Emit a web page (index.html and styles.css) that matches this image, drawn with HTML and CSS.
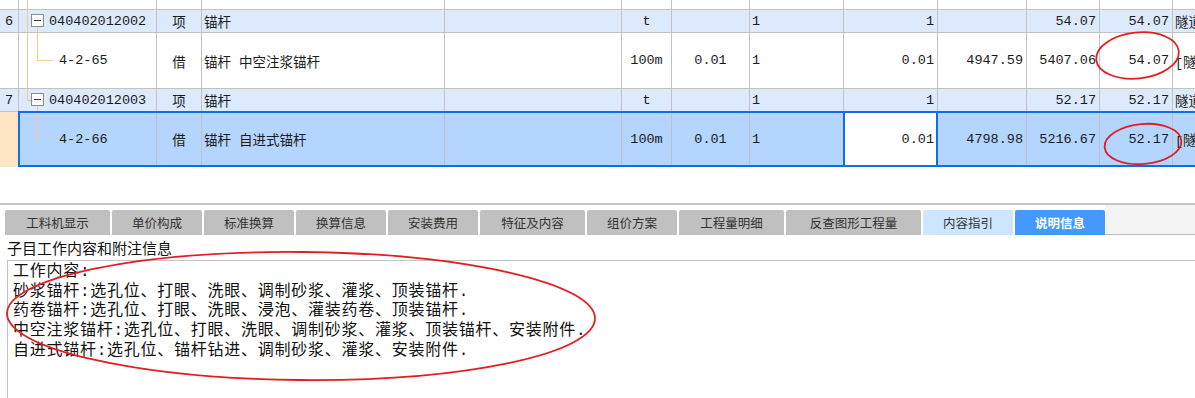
FILE: index.html
```html
<!DOCTYPE html>
<html lang="zh-CN">
<head>
<meta charset="utf-8">
<title>说明信息</title>
<link rel="stylesheet" href="styles.css">
</head>
<body>
<div class="page">
  <div class="grid">
    <div class="row r-top">
      <div class="c c0"></div>
      <div class="c c1"><span class="tl v full"></span></div>
      <div class="c c2"></div><div class="c c3"></div><div class="c c4"></div><div class="c c5"></div><div class="c c6"></div><div class="c c7"></div><div class="c c8"></div><div class="c c9"></div><div class="c c10"></div><div class="c c11"></div><div class="c c12"></div>
    </div>

    <div class="row r-h">
      <div class="c c0">6</div>
      <div class="c c1 code"><span class="tl v full"></span><span class="tbox"></span><span class="tl v down"></span>040402012002</div>
      <div class="c c2">项</div>
      <div class="c c3">锚杆</div>
      <div class="c c4"></div>
      <div class="c c5">t</div>
      <div class="c c6"></div>
      <div class="c c7">1</div>
      <div class="c c8">1</div>
      <div class="c c9"></div>
      <div class="c c10">54.07</div>
      <div class="c c11">54.07</div>
      <div class="c c12">隧道工程</div>
    </div>

    <div class="row r-c">
      <div class="c c0"></div>
      <div class="c c1 sub"><span class="tl v full"></span><span class="tl v elbow"></span><span class="tl h elbow-h"></span>4-2-65</div>
      <div class="c c2">借</div>
      <div class="c c3">锚杆 中空注浆锚杆</div>
      <div class="c c4"></div>
      <div class="c c5">100m</div>
      <div class="c c6">0.01</div>
      <div class="c c7">1</div>
      <div class="c c8">0.01</div>
      <div class="c c9">4947.59</div>
      <div class="c c10">5407.06</div>
      <div class="c c11">54.07</div>
      <div class="c c12">[隧道工程]</div>
    </div>

    <div class="row r-h r-last">
      <div class="c c0">7</div>
      <div class="c c1 code"><span class="tl v half"></span><span class="tl h stub"></span><span class="tbox"></span><span class="tl v down"></span>040402012003</div>
      <div class="c c2">项</div>
      <div class="c c3">锚杆</div>
      <div class="c c4"></div>
      <div class="c c5">t</div>
      <div class="c c6"></div>
      <div class="c c7">1</div>
      <div class="c c8">1</div>
      <div class="c c9"></div>
      <div class="c c10">52.17</div>
      <div class="c c11">52.17</div>
      <div class="c c12">隧道工程</div>
    </div>

    <div class="row r-sel">
      <div class="sel-no"></div>
      <div class="sel-box">
        <div class="c c1 sub s1"><span class="tl v elbow-s"></span><span class="tl h elbow-sh"></span>4-2-66</div>
        <div class="c c2">借</div>
        <div class="c c3">锚杆 自进式锚杆</div>
        <div class="c c4"></div>
        <div class="c c5">100m</div>
        <div class="c c6">0.01</div>
        <div class="c c7 s7">1</div>
        <div class="c c8 s8">0.01</div>
        <div class="c c9">4798.98</div>
        <div class="c c10">5216.67</div>
        <div class="c c11">52.17</div>
        <div class="c c12">[隧道工程]</div>
      </div>
    </div>
  </div>

  <div class="tabline"></div>
  <div class="tabstrip">
    <div class="tabs">
      <div class="tab w105">工料机显示</div>
      <div class="tab w90">单价构成</div>
      <div class="tab w90">标准换算</div>
      <div class="tab w90">换算信息</div>
      <div class="tab w90">安装费用</div>
      <div class="tab w105">特征及内容</div>
      <div class="tab w90">组价方案</div>
      <div class="tab w105">工程量明细</div>
      <div class="tab w135">反查图形工程量</div>
      <div class="tab w90 tab-soft">内容指引</div>
      <div class="tab w90 tab-active">说明信息</div>
    </div>
    <div class="tabfill"></div>
  </div>

  <div class="label">子目工作内容和附注信息</div>
  <div class="memo">
    <div class="memo-line">工作内容:</div>
    <div class="memo-line">砂浆锚杆:选孔位、打眼、洗眼、调制砂浆、灌浆、顶装锚杆.</div>
    <div class="memo-line">药卷锚杆:选孔位、打眼、洗眼、浸泡、灌装药卷、顶装锚杆.</div>
    <div class="memo-line">中空注浆锚杆:选孔位、打眼、洗眼、调制砂浆、灌浆、顶装锚杆、安装附件.</div>
    <div class="memo-line">自进式锚杆:选孔位、锚杆钻进、调制砂浆、灌浆、安装附件.</div>
  </div>

  <svg class="marks" width="1195" height="398" viewBox="0 0 1195 398">
    <ellipse cx="1137.5" cy="55.5" rx="41.5" ry="23" transform="rotate(-6 1137.5 55.5)"/>
    <ellipse cx="1143" cy="144" rx="38.5" ry="20" transform="rotate(-5 1143 144)"/>
    <ellipse cx="301" cy="316" rx="294" ry="64" transform="rotate(0.5 301 316)"/>
  </svg>
</div>
</body>
</html>
```

FILE: styles.css
```css
* {
  box-sizing: border-box;
  margin: 0;
  padding: 0;
}

html, body {
  width: 1195px;
  height: 398px;
  overflow: hidden;
  background: #ffffff;
}

body {
  font-family: "Liberation Mono", "Noto Sans CJK SC", monospace;
  font-size: 13.5px;
  color: #1c1c1c;
}

.page {
  position: relative;
  width: 1195px;
  height: 398px;
  overflow: hidden;
}

/* ---------- grid ---------- */
.grid {
  width: 1230px;
}

.row {
  display: flex;
}

.c {
  display: flex;
  align-items: center;
  white-space: nowrap;
  overflow: hidden;
  position: relative;
  border-right: 1px solid #c2c2c2;
  border-bottom: 1px solid #c2c2c2;
}

.c0 { width: 19px; justify-content: center; }
.c1 { width: 138px; }
.c2 { width: 45px; justify-content: center; }
.c3 { width: 243px; padding-left: 2px; }
.c4 { width: 177px; }
.c5 { width: 50px; justify-content: center; }
.c6 { width: 78px; justify-content: center; }
.c7 { width: 94px; padding-left: 2px; }
.c8 { width: 94px; justify-content: flex-end; padding-right: 3px; }
.c9 { width: 89px; justify-content: flex-end; padding-right: 3px; }
.c10 { width: 73px; justify-content: flex-end; padding-right: 3px; }
.c11 { width: 73px; justify-content: flex-end; padding-right: 3px; }
.c12 { flex: 1; border-right: none; padding-left: 2px; }

.r-top { height: 10px; }
.r-h { height: 23px; background: #dde9fc; }
.r-c { height: 56px; background: #ffffff; }
.r-last { height: 22px; }
.r-last .c { border-bottom: none; }

.code { padding-left: 30px; }
.sub { padding-left: 40px; }

/* selected row */
.r-sel { height: 56px; }

.sel-no {
  width: 18px;
  flex: none;
  background: #fde4c5;
  border-top: 1px solid #c2c2c2;
}

.sel-box {
  flex: 1;
  display: flex;
  background: #b4d5fd;
  border: 2px solid #0e6cf2;
}

.sel-box .c { border-bottom: none; }
.sel-box .s1 { width: 137px; padding-left: 39px; }
.sel-box .s7 { width: 93px; border-right: none; }
.sel-box .s8 {
  width: 95px;
  background: #ffffff;
  border-left: 2px solid #0e6cf2;
  border-right: 2px solid #0e6cf2;
  padding-right: 2px;
}

/* tree lines */
.tl {
  position: absolute;
  background: #f7c88f;
}

.tl.v { width: 1px; }
.tl.h { height: 1px; }

.tl.full { left: 8px; top: 0; bottom: 0; }
.tl.half { left: 8px; top: 0; height: 12px; }
.tl.stub { left: 8px; top: 11px; width: 4px; }
.tl.down { left: 18px; top: 17px; bottom: 0; }
.tl.elbow { left: 18px; top: 0; height: 28px; }
.tl.elbow-h { left: 18px; top: 27px; width: 16px; }
.tl.elbow-s { left: 17px; top: 0; height: 27px; }
.tl.elbow-sh { left: 17px; top: 26px; width: 16px; }

.tbox {
  position: absolute;
  left: 12px;
  top: 4px;
  width: 13px;
  height: 13px;
  border: 1px solid #8c8c8c;
  background: #ffffff;
}

.tbox::after {
  content: "";
  position: absolute;
  left: 2px;
  right: 2px;
  top: 5px;
  height: 1px;
  background: #333333;
}

/* ---------- tabs ---------- */
.tabline {
  margin-top: 36px;
  height: 2px;
  background: #c3c3c3;
}

.tabstrip {
  display: flex;
  height: 30px;
}

.tabs {
  display: flex;
  gap: 2px;
  padding-top: 5px;
  padding-left: 5px;
  background: #ffffff;
}

.tab {
  height: 25px;
  display: flex;
  align-items: center;
  justify-content: center;
  background: #c0c0c0;
  border-radius: 2px 2px 0 0;
  font-family: "Noto Sans CJK SC", "Noto Sans", sans-serif;
  font-size: 12.5px;
  color: #333333;
}

.w90 { width: 90px; }
.w105 { width: 105px; }
.w135 { width: 135px; }

.tab-soft { background: #cde6fe; }
.tab-active { background: #4599fe; color: #ffffff; font-weight: bold; }

.tabfill {
  flex: 1;
  background: #f4f4f4;
  border-bottom: 1px solid #bdbdbd;
}

/* ---------- memo ---------- */
.label {
  height: 25px;
  line-height: 25px;
  padding-left: 7px;
  font-family: "Noto Sans CJK SC", sans-serif;
  font-size: 15px;
  color: #111111;
}

.memo {
  margin-left: 7px;
  height: 200px;
  border-top: 1px solid #c3c3c3;
  border-left: 1px solid #c3c3c3;
  padding: 2px 0 0 5px;
  font-size: 16px;
  line-height: 19.7px;
  letter-spacing: 0.75px;
  color: #111111;
}

.memo-line {
  white-space: nowrap;
}

/* ---------- annotations ---------- */
.marks {
  position: absolute;
  left: 0;
  top: 0;
  pointer-events: none;
}

.marks ellipse {
  fill: none;
  stroke: #e31d23;
  stroke-width: 1.8;
}
```
